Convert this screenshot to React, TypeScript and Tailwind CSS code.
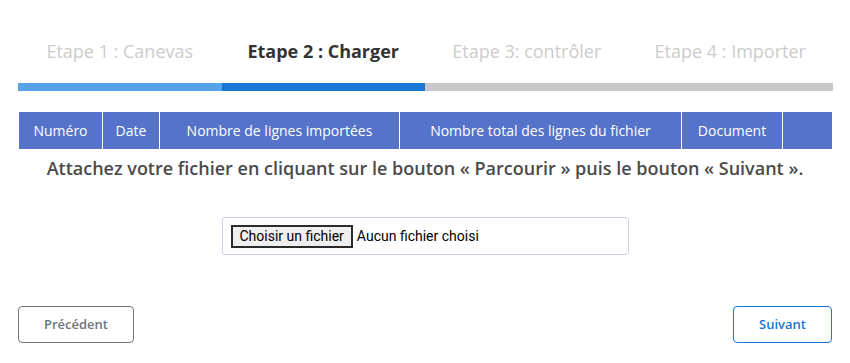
export default function App() {
  const steps = [
    { label: 'Etape 1 : Canevas', active: false },
    { label: 'Etape 2 : Charger', active: true },
    { label: 'Etape 3: contrôler', active: false },
    { label: 'Etape 4 : Importer', active: false },
  ]

  const cols = [
    { label: 'Numéro', w: 'w-[83px]' },
    { label: 'Date', w: 'w-[57px] border-l' },
    { label: 'Nombre de lignes importées', w: 'w-[240px] border-l' },
    { label: 'Nombre total des lignes du fichier', w: 'w-[282px] border-l' },
    { label: 'Document', w: 'w-[101px] border-l' },
    { label: '', w: 'flex-1 border-l' },
  ]

  return (
    <div className="min-h-screen bg-white px-[18px] font-['Open_Sans',sans-serif]">
      <div className="grid grid-cols-4 pt-[38px]">
        {steps.map((s) => (
          <div
            key={s.label}
            className={
              'text-center text-[18px] leading-[27px] ' +
              (s.active ? 'font-bold text-[#333333]' : 'text-[#cccccc]')
            }
          >
            {s.label}
          </div>
        ))}
      </div>

      <div className="mt-[18px] flex h-[8px] w-[815px]">
        <div className="w-[204px] bg-[#57a3e7]" />
        <div className="w-[203px] bg-[#1976d2]" />
        <div className="flex-1 bg-[#c8c8c8]" />
      </div>

      <div className="mt-[20px] flex w-[815px] border border-white bg-[#5473c9]">
        {cols.map((c, i) => (
          <div
            key={i}
            className={`${c.w} flex h-[37px] items-center justify-center border-white text-[14px] text-white`}
          >
            {c.label}
          </div>
        ))}
      </div>

      <p className="mt-[5px] text-center text-[18px] font-semibold leading-[27px] text-[#4a4a4a]">
        Attachez votre fichier en cliquant sur le bouton « Parcourir » puis le bouton « Suivant ».
      </p>

      <div className="mt-[35px] flex justify-center">
        <div className="flex h-[38px] w-[407px] items-center rounded-[3px] border border-[#c9d3e2] px-[8px] font-['Roboto',sans-serif] text-[14px] text-black">
          <span className="flex h-[23px] items-center border-2 border-[#2b2b2b] bg-[#efefef] px-[7px] leading-none">
            Choisir un fichier
          </span>
          <span className="ml-[4px]">Aucun fichier choisi</span>
        </div>
      </div>

      <div className="mt-[51px] flex justify-between">
        <button className="h-[37px] w-[116px] rounded-[4px] border border-[#6c757d] text-[13px] font-semibold text-[#6c757d]">
          Précédent
        </button>
        <button className="h-[37px] w-[99px] rounded-[4px] border border-[#1976d2] text-[13px] font-semibold text-[#1976d2]">
          Suivant
        </button>
      </div>
    </div>
  )
}
